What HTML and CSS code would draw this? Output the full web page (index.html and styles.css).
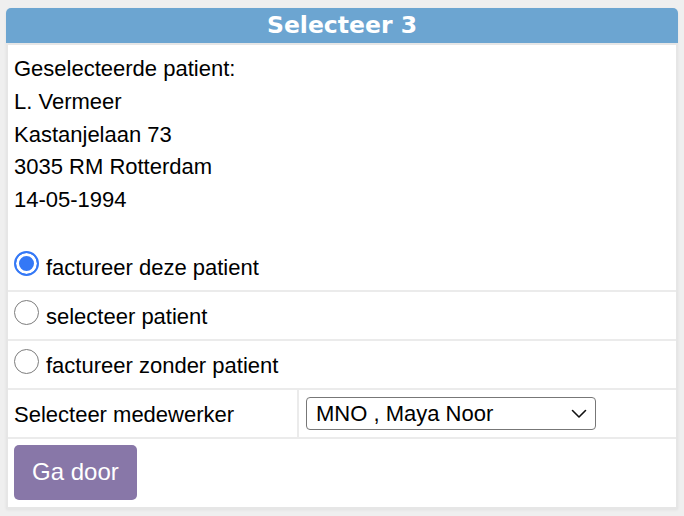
FILE: index.html
```html
<!DOCTYPE html>
<html lang="nl">
<head>
<meta charset="utf-8">
<title>Selecteer 3</title>
<link rel="stylesheet" href="styles.css">
</head>
<body>
<div class="card">
  <div class="card-header">Selecteer 3</div>
  <div class="card-body">
    <div class="info">
      <div class="line">Geselecteerde patient:</div>
      <div class="line">L. Vermeer</div>
      <div class="line">Kastanjelaan 73</div>
      <div class="line">3035 RM Rotterdam</div>
      <div class="line">14-05-1994</div>
    </div>
    <label class="row radio-row">
      <input type="radio" name="keuze" class="radio" checked>
      <span>factureer deze patient</span>
    </label>
    <label class="row radio-row">
      <input type="radio" name="keuze" class="radio">
      <span>selecteer patient</span>
    </label>
    <label class="row radio-row">
      <input type="radio" name="keuze" class="radio">
      <span>factureer zonder patient</span>
    </label>
    <div class="row split">
      <div class="cell label-cell">Selecteer medewerker</div>
      <div class="cell select-cell">
        <div class="select-wrap">
          <select class="select">
            <option>MNO , Maya Noor</option>
          </select>
          <svg class="chevron" width="16" height="10" viewBox="0 0 16 10"><path d="M1.5 1.5 L8 8 L14.5 1.5" fill="none" stroke="#111" stroke-width="1.6" stroke-linecap="round" stroke-linejoin="round"/></svg>
        </div>
      </div>
    </div>
    <div class="row button-row">
      <button class="btn">Ga door</button>
    </div>
  </div>
</div>
</body>
</html>
```
FILE: styles.css
```css
html, body {
  margin: 0;
  padding: 0;
}
body {
  background: #efefef;
  padding: 8px 6px;
  font-family: "Liberation Sans", Arial, sans-serif;
  font-size: 22px;
  color: #000;
}
.card {
  width: 672px;
  box-shadow: 0 1px 3px rgba(0,0,0,0.06);
  border-radius: 5px 5px 0 0;
}
.card-header {
  height: 35px;
  line-height: 35px;
  background: #6ca5d1;
  color: #fff;
  text-align: center;
  font-family: "DejaVu Sans", Verdana, sans-serif;
  font-weight: bold;
  font-size: 23.5px;
  border-radius: 5px 5px 0 0;
}
.card-body {
  background: #fff;
  border: 2px solid #e6e6e6;
  display: flex;
  flex-direction: column;
}
.info {
  padding: 8px 6px 26px;
}
.line {
  line-height: 32.75px;
}
.row {
  border-top: 2px solid #ebebeb;
}
.radio-row {
  display: flex;
  align-items: flex-start;
  gap: 7px;
  padding: 8px 6px 6px;
  line-height: 33px;
  cursor: pointer;
}
.radio-row:first-of-type {
  border-top: none;
}
.radio {
  appearance: none;
  -webkit-appearance: none;
  margin: 0;
  width: 25px;
  height: 25px;
  border-radius: 50%;
  border: 1.5px solid #7d7d7d;
  background: #fff;
  flex: none;
  box-sizing: border-box;
}
.radio:checked {
  border: 2.5px solid #3478f6;
  background: #3478f6;
  box-shadow: inset 0 0 0 3px #fff;
}
.split {
  display: grid;
  grid-template-columns: 289px 1fr;
}
.cell {
  padding: 7px 6px;
  line-height: 33px;
}
.label-cell {
  padding-top: 8px;
  padding-bottom: 6px;
}
.select-cell {
  border-left: 2px solid #ebebeb;
  padding-left: 7px;
}
.select-wrap {
  position: relative;
  width: 290px;
  height: 33px;
}
.select {
  appearance: none;
  -webkit-appearance: none;
  width: 290px;
  height: 33px;
  box-sizing: border-box;
  border: 1.5px solid #777;
  border-radius: 4px;
  background: #fff;
  font-family: "Liberation Sans", Arial, sans-serif;
  font-size: 22px;
  color: #000;
  padding: 0 30px 0 9px;
  margin: 0;
}
.chevron {
  position: absolute;
  right: 9px;
  top: 12px;
  pointer-events: none;
}
.button-row {
  padding: 6px 6px 7px;
}
.btn {
  background: #8877a8;
  color: #fff;
  border: none;
  border-radius: 5px;
  height: 55px;
  padding: 0 18px;
  font-family: "Liberation Sans", Arial, sans-serif;
  font-size: 24px;
  cursor: pointer;
}
```
